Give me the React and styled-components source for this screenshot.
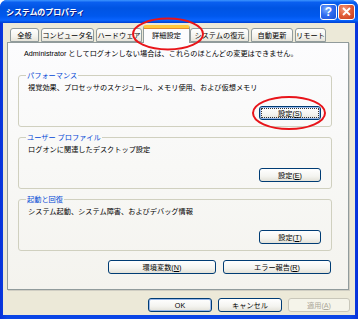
import React from 'react'
import styled, { createGlobalStyle } from 'styled-components'

const GlobalStyle = createGlobalStyle`
  html, body {
    margin: 0;
    padding: 0;
    background: #ffffff;
  }
  body {
    font-family: "Liberation Sans", "Noto Sans CJK JP", sans-serif;
    font-size: 7.2px;
    color: #000;
  }
`;

const Window = styled.div`
  position: relative;
  width: 358px;
  height: 319px;
  box-sizing: border-box;
  display: flex;
  flex-direction: column;
  background: linear-gradient(90deg, #0831d9 0%, #0a45e6 2%, #0a45e6 98%, #0831d9 100%);
  border-radius: 7px 7px 0 0;
  overflow: hidden;
`;

const TitleBar = styled.div`
  height: 23px;
  flex: none;
  display: flex;
  align-items: center;
  justify-content: space-between;
  padding: 0 3px 0 6px;
  background: linear-gradient(180deg, #3d95ff 0%, #0a5ff0 10%, #0054e3 35%, #0058ee 70%, #0a64ff 88%, #0050e0 95%, #003dd7 100%);
`;

const Title = styled.div`
  color: #fff;
  font-family: "Noto Sans CJK JP", sans-serif;
  font-weight: bold;
  font-size: 8px;
  letter-spacing: -0.1px;
  text-shadow: 1px 1px 0 #0a1a8a;
`;

const Caption = styled.div`
  display: flex;
  gap: 1px;
  align-items: center;
`;

const CaptionButton = styled.div`
  width: 15px;
  height: 14px;
  border: 1px solid #fff;
  border-radius: 3px;
  display: flex;
  align-items: center;
  justify-content: center;
  color: #fff;
  font-weight: bold;
  font-size: 12px;
  font-family: "Liberation Sans", sans-serif;
  background: ${({ $close }) =>
    $close
      ? 'radial-gradient(circle at 35% 30%, #f39a7c 0%, #e2603b 45%, #c4381a 100%)'
      : 'radial-gradient(circle at 35% 30%, #7fb0ff 0%, #2f6cf0 45%, #1a4fd4 100%)'};
`;

const Body = styled.div`
  flex: 1;
  margin: 0 3px 4px 3px;
  background: #ece9d8;
  padding: 1px 6px 0 4px;
  display: flex;
  flex-direction: column;
`;

const TabRow = styled.div`
  height: 18px;
  display: flex;
  align-items: flex-end;
  padding-left: 3px;
`;

const Tab = styled.div`
  box-sizing: border-box;
  width: ${({ $w }) => $w}px;
  height: ${({ $active }) => ($active ? 18 : 14)}px;
  margin-right: ${({ $active }) => ($active ? 0 : 2)}px;
  margin-left: ${({ $active }) => ($active ? -1 : 0)}px;
  margin-bottom: ${({ $active }) => ($active ? -1 : 0)}px;
  position: ${({ $active }) => ($active ? 'relative' : 'static')};
  z-index: ${({ $active }) => ($active ? 1 : 'auto')};
  border: 1px solid #919b9c;
  border-bottom: ${({ $active }) => ($active ? 'none' : '1px solid #919b9c')};
  border-top: ${({ $active }) => ($active ? '3px solid #ffc83c' : '1px solid #919b9c')};
  border-radius: 3px 3px 0 0;
  background: ${({ $active }) =>
    $active ? '#fcfcfe' : 'linear-gradient(180deg, #ffffff 0%, #f4f3ee 60%, #e6e4da 100%)'};
  display: flex;
  align-items: center;
  justify-content: center;
  padding-bottom: ${({ $active }) => ($active ? 2 : 0)}px;
  white-space: nowrap;
  box-shadow: ${({ $active }) => ($active ? 'inset 0 1px 0 #e68b2c' : 'none')};
`;

const Panel = styled.div`
  box-sizing: border-box;
  height: 248px;
  border: 1px solid #919b9c;
  box-shadow: 1px 1px 0 #d0cec3;
  background: linear-gradient(180deg, #fcfcfe 0%, #f8f8f6 50%, #f4f3ee 100%);
  padding: 6px 16px 0 10px;
  display: flex;
  flex-direction: column;
`;

const Note = styled.div`
  line-height: 10px;
  padding-left: 6px;
  margin-bottom: 12px;
  white-space: nowrap;
`;

const Group = styled.fieldset`
  margin: 0 0 6px 0;
  padding: 3px 10px 6px 9px;
  border: 1px solid #d0d0bf;
  border-radius: 3px;
  min-width: 0;
`;

const Legend = styled.legend`
  color: #0046d5;
  line-height: 9px;
  padding: 0 1px;
  margin-left: -2px;
`;

const Desc = styled.div`
  line-height: 10px;
  white-space: nowrap;
`;

const ButtonRow = styled.div`
  display: flex;
  justify-content: flex-end;
  gap: ${({ $gap }) => $gap || 0}px;
  margin-top: ${({ $top }) => $top || 0}px;
  margin-right: ${({ $right }) => $right || 0}px;
`;

const Button = styled.div`
  box-sizing: border-box;
  width: ${({ $w }) => $w}px;
  height: 14px;
  border: 1px solid ${({ $disabled }) => ($disabled ? '#c9c7ba' : '#003c74')};
  border-radius: 3px;
  color: ${({ $disabled }) => ($disabled ? '#aca899' : '#000')};
  background: ${({ $disabled }) =>
    $disabled ? '#f5f4ea' : 'linear-gradient(180deg, #ffffff 0%, #f4f4f0 60%, #e3e1d8 100%)'};
  display: flex;
  align-items: center;
  justify-content: center;
  white-space: nowrap;
  box-shadow: ${({ $default }) => ($default ? 'inset 0 0 0 1px #98b8ea' : 'none')};
  outline: ${({ $focus }) => ($focus ? '1px dotted #333' : 'none')};
  outline-offset: -3px;
`;

const Footer = styled.div`
  padding-top: 8px;
`;

const Marks = styled.svg`
  position: absolute;
  left: 0;
  top: 0;
  pointer-events: none;
`;

const tabs = [
  { label: '全般', w: 29 },
  { label: 'コンピュータ名', w: 53 },
  { label: 'ハードウェア', w: 46 },
  { label: '詳細設定', w: 47, active: true },
  { label: 'システムの復元', w: 59 },
  { label: '自動更新', w: 42 },
  { label: 'リモート', w: 31 },
];

const groups = [
  { title: 'パフォーマンス', desc: '視覚効果、プロセッサのスケジュール、メモリ使用、および仮想メモリ', key: 'S', focus: true },
  { title: 'ユーザー プロファイル', desc: 'ログオンに関連したデスクトップ設定', key: 'E' },
  { title: '起動と回復', desc: 'システム起動、システム障害、およびデバッグ情報', key: 'T' },
];

export default function App() {
  return (
    <>
      <GlobalStyle />
      <Window>
        <TitleBar>
          <Title>システムのプロパティ</Title>
          <Caption>
            <CaptionButton>?</CaptionButton>
            <CaptionButton $close>
              <svg width="9" height="9" viewBox="0 0 9 9">
                <path d="M1 1 L8 8 M8 1 L1 8" stroke="#fff" strokeWidth="1.8" />
              </svg>
            </CaptionButton>
          </Caption>
        </TitleBar>
        <Body>
          <TabRow>
            {tabs.map((t) => (
              <Tab key={t.label} $w={t.w} $active={t.active}>{t.label}</Tab>
            ))}
          </TabRow>
          <Panel>
            <Note>Administrator としてログオンしない場合は、これらのほとんどの変更はできません。</Note>
            {groups.map((g) => (
              <Group key={g.key}>
                <Legend>{g.title}</Legend>
                <Desc>{g.desc}</Desc>
                <ButtonRow $top={13}>
                  <Button $w={62} $default={g.focus} $focus={g.focus}>設定(<u>{g.key}</u>)</Button>
                </ButtonRow>
              </Group>
            ))}
            <ButtonRow $top={3} $gap={7} $right={1}>
              <Button $w={108}>環境変数(<u>N</u>)</Button>
              <Button $w={108}>エラー報告(<u>R</u>)</Button>
            </ButtonRow>
          </Panel>
          <Footer>
            <ButtonRow $gap={6} $right={-1}>
              <Button $w={64} $default>OK</Button>
              <Button $w={64}>キャンセル</Button>
              <Button $w={62} $disabled>適用(<u>A</u>)</Button>
            </ButtonRow>
          </Footer>
        </Body>
        <Marks width="358" height="319" viewBox="0 0 358 319">
          <ellipse cx="168" cy="34" rx="35" ry="15.5" fill="none" stroke="#e8141a" strokeWidth="2" />
          <ellipse cx="289" cy="113" rx="36" ry="16" fill="none" stroke="#e8141a" strokeWidth="2" />
        </Marks>
      </Window>
    </>
  )
}
